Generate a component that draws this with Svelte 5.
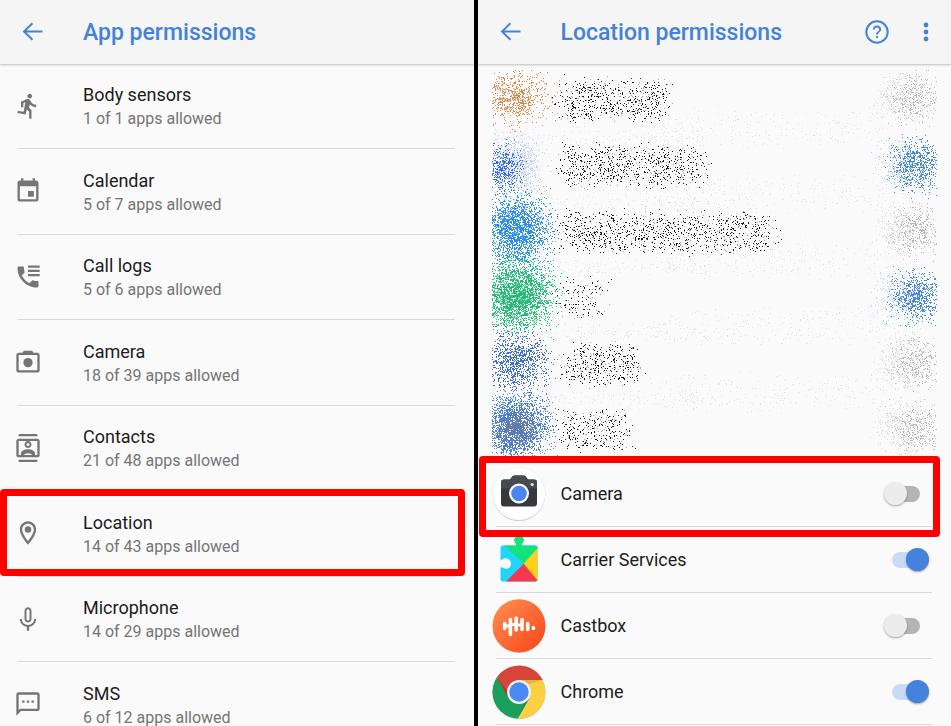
<script lang="ts">
    const permissions = [
        { id: 'sensors', name: 'Body sensors', allowed: 1, total: 1 },
        { id: 'calendar', name: 'Calendar', allowed: 5, total: 7 },
        { id: 'calls', name: 'Call logs', allowed: 5, total: 6 },
        { id: 'camera', name: 'Camera', allowed: 18, total: 39 },
        { id: 'contacts', name: 'Contacts', allowed: 21, total: 48 },
        { id: 'location', name: 'Location', allowed: 14, total: 43 },
        { id: 'microphone', name: 'Microphone', allowed: 14, total: 29 },
        { id: 'sms', name: 'SMS', allowed: 6, total: 12 }
    ];

    let apps = $state([
        { id: 'app-camera', name: 'Camera', on: false },
        { id: 'app-carrier', name: 'Carrier Services', on: true },
        { id: 'app-castbox', name: 'Castbox', on: false },
        { id: 'app-chrome', name: 'Chrome', on: true }
    ]);

    const highlighted = ['location', 'app-camera'];

    // small seeded generator so the speckles are the same on every load
    let seed = 7;
    function random() {
        seed = (seed * 16807) % 2147483647;
        return seed / 2147483647;
    }

    function spread() {
        return (random() + random() + random()) / 1.5 - 1;
    }

    function toPath(points: number[][]) {
        return points
            .map(([x, y]) => [Math.round(x), Math.round(y)])
            .filter(([x, y]) => x >= 14 && x < 459 && y >= 5 && y < 391)
            .map(([x, y]) => `M${x} ${y}h1v1h-1z`)
            .join('');
    }

    // speckles that get denser towards the middle
    function blob(color: string, cx: number, cy: number, rx: number, ry: number, count: number) {
        const points = [];
        for (let i = 0; i < count; i++) {
            points.push([cx + spread() * rx, cy + spread() * ry]);
        }
        return { color, d: toPath(points) };
    }

    // speckles spread evenly, with loose edges
    function band(color: string, x: number, y: number, w: number, h: number, count: number) {
        const points = [];
        for (let i = 0; i < count; i++) {
            points.push([x + random() * w + spread() * 16, y + random() * h + spread() * 11]);
        }
        return { color, d: toPath(points) };
    }

    const textWidths = [104, 140, 210, 38, 74, 64];
    const textCounts = [430, 560, 800, 95, 290, 220];
    const switches = [false, true, false, true, false, false];

    const speckles = [
        ...[0, 1, 2, 3, 4].map((i) => band('#e2e2e2', 20, 64 + i * 66, 210, 12, 150)),
        ...[0, 1, 2, 3, 4].map((i) => band('#e2e2e2', 180, 48 + i * 66, 225, 30, 230)),
        blob('#d98a4b', 39, 33, 44, 38, 560),
        blob('#d98a4b', 26, 30, 34, 34, 200),
        blob('#b9cffa', 37, 100, 40, 42, 800),
        blob('#3c6cd8', 24, 104, 30, 32, 480),
        blob('#2f8fe6', 38, 165, 48, 50, 2300),
        blob('#1fbf74', 39, 230, 50, 48, 2700),
        blob('#3f6cc9', 38, 296, 46, 42, 1150),
        blob('#4a80dc', 38, 361, 48, 48, 2400),
        blob('#72788e', 38, 363, 28, 28, 480),
        ...textWidths.map((w, i) => band('#a4a4a4', 84, 18 + i * 66, w, 34, textCounts[i] / 2)),
        ...textWidths.map((w, i) => band('#1b1b1b', 84, 18 + i * 66, w, 34, textCounts[i])),
        ...switches.map((on, i) =>
            blob(on ? '#bcd7f5' : '#dedede', 420, 33 + i * 66, 34, 36, 300)
        ),
        ...switches.map((on, i) =>
            blob(on ? '#4886d6' : '#b8b8b8', 438, 33 + i * 66, 36, 36, on ? 760 : 330)
        )
    ];
</script>

{#snippet backArrow()}
    <button class="icon-button back" aria-label="Back">
        <svg width="24" height="24" viewBox="0 0 24 24">
            <path d="M22.5 11.5H4M12.5 3.2L4 11.5l8.500 8.300" fill="none" stroke="currentColor" stroke-width="2" />
        </svg>
    </button>
{/snippet}

<main>
    <section class="screen">
        <header>
            {@render backArrow()}
            <h1>App permissions</h1>
        </header>
        <nav>
            {#each permissions as item}
                <a class="permission" class:highlight={highlighted.includes(item.id)} href="#{item.id}">
                    <svg class="glyph" width="28" height="28" viewBox="0 0 24 24" fill="currentColor">
                        {#if item.id === 'sensors'}
                            <path d="M13.49 5.48c1.1 0 2-.9 2-2s-.9-2-2-2-2 .9-2 2 .9 2 2 2zm-3.6 13.9l1-4.4 2.1 2v6h2v-7.5l-2.1-2 .6-3c1.3 1.5 3.3 2.5 5.5 2.5v-2c-1.9 0-3.5-1-4.3-2.4l-1-1.6c-.4-.6-1-1-1.7-1-.3 0-.5.1-.8.1l-5.2 2.2v4.7h2v-3.4l1.8-.7-1.6 8.1-4.9-1-.4 2 7 1.4z" />
                        {:else if item.id === 'calendar'}
                            <path d="M17 12h-5v5h5v-5zM16 1v2H8V1H6v2H5c-1.11 0-1.99.9-1.99 2L3 19c0 1.1.89 2 2 2h14c1.1 0 2-.9 2-2V5c0-1.1-.9-2-2-2h-1V1h-2zm3 18H5V8h14v11z" />
                        {:else if item.id === 'calls'}
                            <path d="M20 15.5c-1.25 0-2.45-.2-3.57-.57-.35-.11-.74-.03-1.02.24l-2.2 2.2c-2.83-1.44-5.15-3.75-6.59-6.59l2.2-2.2c.28-.27.36-.66.25-1.01C8.7 6.45 8.5 5.25 8.5 4c0-.55-.45-1-1-1H4c-.55 0-1 .45-1 1 0 9.39 7.61 17 17 17 .55 0 1-.45 1-1v-3.5c0-.55-.45-1-1-1zM12 2.2h10v1.9H12zM12 5.8h10v1.9H12zM12 9.4h10v1.9H12z" />
                        {:else if item.id === 'camera'}
                            <path d="M20 4h-3.2L15.5 2.4h-7L7.2 4H4c-1.1 0-2 .9-2 2v13c0 1.1.9 2 2 2h16c1.1 0 2-.9 2-2V6c0-1.1-.9-2-2-2zm0 15H4V6h16v13z" />
                            <circle cx="12" cy="12.5" r="4" />
                        {:else if item.id === 'contacts'}
                            <path d="M20 4H4c-1.1 0-2 .9-2 2v12c0 1.1.9 2 2 2h16c1.1 0 2-.9 2-2V6c0-1.1-.9-2-2-2zm0 14H4V6h16v12zM4 0h16v2H4zM4 22h16v2H4zM12 12c1.66 0 3-1.34 3-3s-1.34-3-3-3-3 1.34-3 3 1.34 3 3 3zm0-4.3a1.3 1.3 0 1 1 0 2.6 1.3 1.3 0 0 1 0-2.6zM18 18v-1.5c0-2.2-3.5-3.5-6-3.5s-6 1.3-6 3.5V18h2.5c.5-1 2-1.6 3.5-1.6s3 .6 3.5 1.6z" />
                        {:else if item.id === 'location'}
                            <path d="M12 2C8.13 2 5 5.13 5 9c0 5.25 7 13 7 13s7-7.75 7-13c0-3.87-3.13-7-7-7zM7 9c0-2.76 2.24-5 5-5s5 2.24 5 5c0 2.88-2.88 7.19-5 9.88C9.92 16.21 7 11.85 7 9z" />
                            <circle cx="12" cy="9" r="2.8" />
                        {:else if item.id === 'microphone'}
                            <path d="M12 15c1.66 0 3-1.34 3-3V5c0-1.66-1.34-3-3-3S9 3.34 9 5v7c0 1.66 1.34 3 3 3zm-1.3-10c0-.7.6-1.3 1.3-1.3s1.3.6 1.3 1.3v7c0 .7-.6 1.3-1.3 1.3s-1.3-.6-1.3-1.3zm6.6 7c0 3-2.54 5.1-5.3 5.1S6.7 15 6.7 12H5c0 3.41 2.72 6.23 6 6.72V22h2v-3.28c3.28-.48 6-3.3 6-6.72z" />
                        {:else}
                            <path d="M20 2H4c-1.1 0-2 .9-2 2v18l4-4h14c1.1 0 2-.9 2-2V4c0-1.1-.9-2-2-2zm0 14H5.2L4 17.2V4h16zM7 9h2v2H7zM11 9h2v2h-2zM15 9h2v2h-2z" />
                        {/if}
                    </svg>
                    <span class="texts">
                        <span class="name">{item.name}</span>
                        <span class="summary">{item.allowed} of {item.total} apps allowed</span>
                    </span>
                </a>
            {/each}
        </nav>
    </section>

    <section class="screen">
        <header>
            {@render backArrow()}
            <h1>Location permissions</h1>
            <div class="actions">
                <button class="icon-button" aria-label="Help">
                    <svg width="24" height="24" viewBox="0 0 24 24" fill="currentColor">
                        <path d="M11 18h2v-2h-2v2zm1-17.700a11.700 11.700 0 1 0 0 23.400 11.700 11.700 0 0 0 0-23.400zm0 21.400a9.700 9.700 0 1 1 0-19.400 9.700 9.700 0 0 1 0 19.400zM12 5.500c-2.400 0-4.200 1.800-4.200 4h2c0-1.200 1-2.100 2.200-2.100s2.200.9 2.200 2.100c0 2-3.200 2-3.200 5h2c0-2.200 3.200-2.500 3.200-5 0-2.200-1.800-4-4.200-4z" />
                    </svg>
                </button>
                <button class="icon-button" aria-label="More options">
                    <svg width="24" height="24" viewBox="0 0 24 24" fill="currentColor">
                        <circle cx="12" cy="5" r="2.4" />
                        <circle cx="12" cy="12" r="2.4" />
                        <circle cx="12" cy="19" r="2.4" />
                    </svg>
                </button>
            </div>
        </header>
        <div class="apps">
            <svg class="speckles" width="473" height="396" viewBox="0 0 473 396" shape-rendering="crispEdges" aria-hidden="true">
                {#each speckles as group}
                    <path d={group.d} fill={group.color} />
                {/each}
            </svg>
            {#each apps as app}
                <div class="app" class:highlight={highlighted.includes(app.id)}>
                    <svg class="logo" width="54" height="54" viewBox="0 0 54 54">
                        {#if app.id === 'app-camera'}
                            <circle cx="27" cy="27.8" r="26.2" fill="#bdbdbd" />
                            <circle cx="27" cy="27" r="26.5" fill="#e6e6e6" />
                            <circle cx="27" cy="26.8" r="26" fill="#fff" />
                            <path d="M12 12.5h6l2.5-3.2q.8-.8 2-.8h9q1.2 0 2 .8L36 12.5h6q3 0 3 3v21q0 3-3 3H12q-3 0-3-3v-21q0-3 3-3z" fill="#37393d" />
                            <path d="M12 12.5h6l2.5-3.2q.8-.8 2-.8h9q1.2 0 2 .8L36 12.5h6q3 0 3 3v6H9v-6q0-3 3-3z" fill="#484a4f" />
                            <circle cx="27" cy="26.5" r="10" fill="#fff" />
                            <circle cx="27" cy="26.5" r="7.8" fill="#4a86f0" />
                            <circle cx="40.2" cy="17.5" r="1.6" fill="#e4e4e4" />
                        {:else if app.id === 'app-carrier'}
                            <defs>
                                <clipPath id="puzzle">
                                    <path d="M10.5 12.5H24V10.7a4.7 4.7 0 1 1 6 0v1.8h13.5q2 0 2 2v32q0 2-2 2h-33q-2 0-2-2v-12.200h1.8a5.2 5.2 0 1 0 0-7.500H8.500v-12.300q0-2 2-2z" />
                                </clipPath>
                            </defs>
                            <g clip-path="url(#puzzle)">
                                <path d="M0 0h54v54H0z" fill="#20d5fd" />
                                <path d="M8 8.5V0h38v14.5L31.7 30.7z" fill="#14e27b" />
                                <path d="M54 6v48h-6L31.7 30.7z" fill="#ffd016" />
                                <path d="M13 49.5L31.7 30.7 48 50.5z" fill="#f33a4c" />
                            </g>
                        {:else if app.id === 'app-castbox'}
                            <defs>
                                <linearGradient id="orange" x1="0" y1="0" x2="1" y2="1">
                                    <stop offset="0" stop-color="#ff9150" />
                                    <stop offset="1" stop-color="#f9441a" />
                                </linearGradient>
                            </defs>
                            <circle cx="27" cy="27.7" r="26.3" fill="#c9b5ac" />
                            <circle cx="27" cy="26.8" r="26.5" fill="url(#orange)" />
                            <path d="M12.7 24.5v5M18.4 20.5v15M24.2 19v12M30 20.5v10M35.7 24.5v6M41.4 28.5v1" fill="none" stroke="#fff" stroke-width="3.6" stroke-linecap="round" />
                            <path d="M12.7 27h5.7M18.4 25.5h5.8M24.2 26h5.8" stroke="#fff" stroke-width="2.8" />
                        {:else}
                            <circle cx="27" cy="27.5" r="26.5" fill="#b5b5a8" />
                            <path d="M4.8 12.6A26.5 26.5 0 0 1 50.6 15H27L16.6 33z" fill="#d5453a" />
                            <path d="M50.6 15A26.5 26.5 0 0 1 25.6 53.5L37.4 33 27 15z" fill="#fdcf43" />
                            <path d="M25.6 53.5A26.5 26.5 0 0 1 4.8 12.6L16.6 33h20.8z" fill="#1a9f5c" />
                            <path d="M4.8 12.6L16.6 33l.5-4.5z" fill="#a93a31" />
                            <path d="M27 15h23.6L37 19z" fill="#e5b63b" />
                            <path d="M25.6 53.5L37.4 33l-4.5 4z" fill="#168650" />
                            <circle cx="27" cy="27" r="12" fill="#f1f1f1" />
                            <circle cx="27" cy="27" r="9.7" fill="#4a8af4" />
                        {/if}
                    </svg>
                    <label class="name" for={app.id}>{app.name}</label>
                    <input type="checkbox" role="switch" id={app.id} bind:checked={app.on} />
                </div>
            {/each}
        </div>
    </section>
</main>

<style>
    :global(body) {
        margin: 0;
        background-color: #fafafa;
        font-family: Roboto, 'Liberation Sans', sans-serif;
    }

    main {
        display: grid;
        grid-template-columns: 1fr 1fr;
        gap: 4px;
        height: 100vh;
        overflow: hidden;
        background-color: #000;
    }

    .screen {
        min-width: 0;
        background-color: #fafafa;
    }

    header {
        display: flex;
        align-items: center;
        box-sizing: border-box;
        height: 64px;
        padding: 0 13px 0 20px;
        background-color: #f5f5f5;
        box-shadow: 0 1px 2px rgba(0, 0, 0, 0.25);
        color: #4482d9;
    }

    h1 {
        margin: 0;
        padding-top: 2px;
        font-size: 23px;
        font-weight: 500;
        line-height: 28px;
        white-space: nowrap;
    }

    .icon-button {
        display: flex;
        padding: 0;
        border: none;
        background: none;
        color: inherit;
    }

    .back {
        margin-right: 39px;
    }

    .actions {
        display: flex;
        gap: 25px;
        margin-left: auto;
    }

    .permission {
        display: flex;
        align-items: center;
        position: relative;
        box-sizing: border-box;
        height: 85px;
        padding-left: 14px;
        color: #757575;
        text-decoration: none;
    }

    .permission:nth-child(even) {
        height: 86px;
    }

    .glyph {
        margin-right: 41px;
        padding-bottom: 2px;
    }

    .texts {
        display: flex;
        flex-direction: column;
    }

    .name {
        color: #1c1c1c;
        font-size: 18px;
        line-height: 24px;
    }

    .summary {
        font-size: 16px;
        line-height: 24px;
    }

    .texts .name {
        padding-top: 1px;
    }

    .permission::before,
    .app::before {
        content: '';
        position: absolute;
        right: 19px;
        bottom: 0;
        left: 18px;
        height: 1px;
        background-color: #d8d8d8;
    }

    .highlight::after {
        content: '';
        position: absolute;
        z-index: 1;
        border: 7px solid #fe0000;
        border-radius: 4px;
        pointer-events: none;
    }

    .permission.highlight::after {
        inset: -2px 9px 1px 0;
    }

    .app.highlight::after {
        inset: -5px 11px -10px 1px;
    }

    .apps {
        padding-top: 1px;
    }

    .speckles {
        display: block;
    }

    .app {
        display: flex;
        align-items: center;
        position: relative;
        height: 66px;
        padding: 0 31px 0 14px;
    }

    .logo {
        margin-right: 15px;
    }

    .app .name {
        flex: 1;
    }

    input {
        appearance: none;
        position: relative;
        width: 28px;
        height: 16px;
        margin: 0;
        border-radius: 8px;
        background-color: #b4b4b4;
    }

    input::before {
        content: '';
        position: absolute;
        top: -4px;
        left: -8px;
        width: 23px;
        height: 23px;
        border-radius: 50%;
        background-color: #ececec;
        box-shadow: 0 1px 2px rgba(0, 0, 0, 0.35);
    }

    input:checked {
        background-color: #c8daf5;
    }

    input:checked::before {
        left: 14px;
        background-color: #4482dc;
    }
</style>
